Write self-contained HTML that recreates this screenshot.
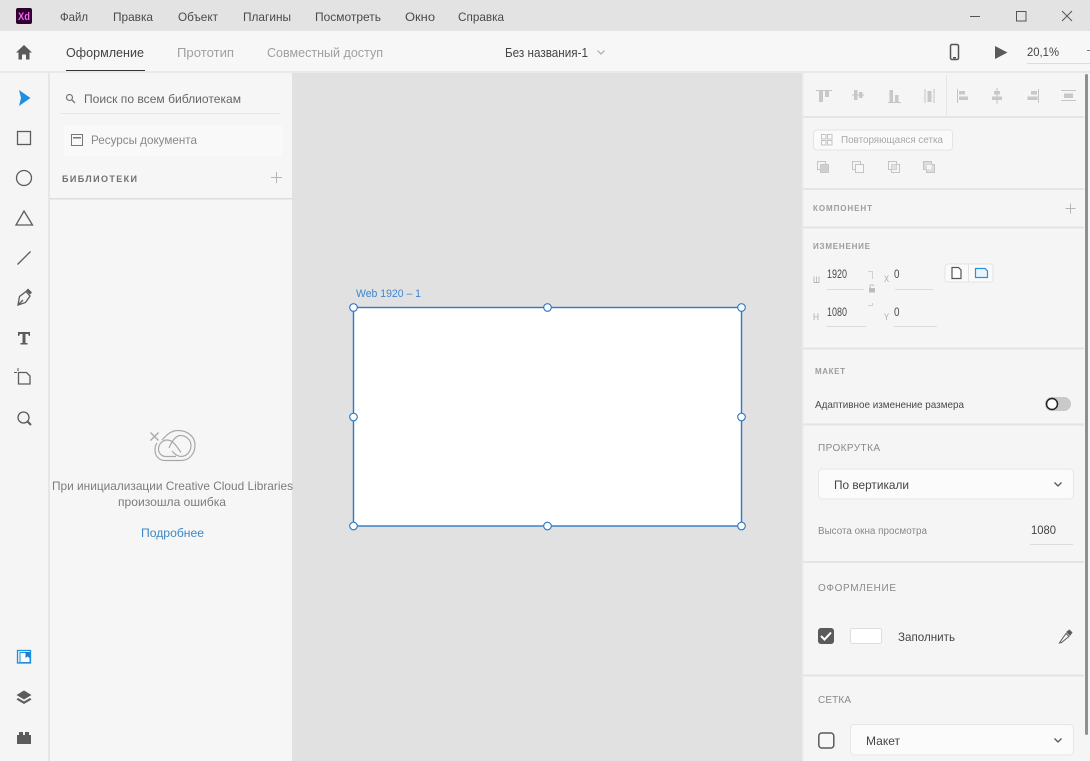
<!DOCTYPE html>
<html lang="ru"><head><meta charset="utf-8"><title>Adobe XD</title>
<style>
html,body{margin:0;padding:0;width:1090px;height:761px;overflow:hidden;background:#e1e1e1}
svg{display:block;filter:blur(.3px)}
text{font-family:"Liberation Sans","DejaVu Sans",sans-serif;font-size:12px;fill:#444}
.m{font-size:12px;fill:#4a4a4a}
.t{font-size:13px}
.s{font-size:10.5px;fill:#4a4a4a}
.n{font-size:11.5px;fill:#4a4a4a}
.g{fill:none;stroke:#c4c4c4;stroke-width:1}
.gf{fill:#c8c8c8}
.i{fill:none;stroke:#5c5c5c;stroke-width:1.3}
.u{stroke:#dcdcdc;stroke-width:1}
.d{stroke:#e4e4e4;stroke-width:2}
.c{font-size:8px;font-weight:bold;fill:#9c9c9c}
.l{font-size:10px;fill:#8a8a8a}
</style></head><body>
<svg width="1090" height="761" viewBox="0 0 1090 761" xmlns="http://www.w3.org/2000/svg">
<rect width="1090" height="761" fill="#e1e1e1"/>
<!-- title bar -->
<rect width="1090" height="31" fill="#e3e3e3"/>
<rect y="31" width="1090" height="41" fill="#f7f7f7"/>
<rect x="16" y="8" width="16" height="16" rx="2" fill="#2e0030"/>
<text x="18" y="20" style="font-size:11px;font-weight:bold;fill:#ff61f6" textLength="12" lengthAdjust="spacingAndGlyphs">Xd</text>
<text class="m" x="60" y="21" textLength="28" lengthAdjust="spacingAndGlyphs">Файл</text>
<text class="m" x="113" y="21" textLength="40" lengthAdjust="spacingAndGlyphs">Правка</text>
<text class="m" x="178" y="21" textLength="40" lengthAdjust="spacingAndGlyphs">Объект</text>
<text class="m" x="243" y="21" textLength="48" lengthAdjust="spacingAndGlyphs">Плагины</text>
<text class="m" x="315" y="21" textLength="66" lengthAdjust="spacingAndGlyphs">Посмотреть</text>
<text class="m" x="405" y="21" textLength="30" lengthAdjust="spacingAndGlyphs">Окно</text>
<text class="m" x="458" y="21" textLength="46" lengthAdjust="spacingAndGlyphs">Справка</text>
<path d="M970 16.500H980" stroke="#555" stroke-width="1"/>
<rect x="1016.500" y="11.500" width="9.500" height="9.500" fill="none" stroke="#555"/>
<path d="M1062 11L1072 21M1072 11L1062 21" stroke="#555" stroke-width="1"/>
<!-- toolbar -->
<path d="M24 45L16 52.500H18.500V59.500H22V54.500H26V59.500H29.500V52.500H32Z" fill="#5a5a5a"/>
<text class="t" x="66" y="57" textLength="78" lengthAdjust="spacingAndGlyphs">Оформление</text>
<rect x="66" y="70" width="79" height="2" fill="#333"/>
<text class="t" x="177" y="57" textLength="57" lengthAdjust="spacingAndGlyphs" style="fill:#a0a0a0">Прототип</text>
<text class="t" x="267" y="57" textLength="116" lengthAdjust="spacingAndGlyphs" style="fill:#a0a0a0">Совместный доступ</text>
<text class="t" x="505" y="57" textLength="83" lengthAdjust="spacingAndGlyphs">Без названия-1</text>
<path d="M597.500 50.500L601 54L604.500 50.500" fill="none" stroke="#aaa" stroke-width="1.200"/>
<rect x="950.500" y="44.500" width="8" height="15" rx="1.500" fill="none" stroke="#555" stroke-width="1.500"/>
<rect x="953" y="57" width="3" height="1.500" fill="#555"/>
<path d="M995 46L1007.500 52.500L995 59Z" fill="#5a5a5a"/>
<text x="1027" y="56" textLength="32" lengthAdjust="spacingAndGlyphs">20,1%</text>
<path d="M1027 63.500H1090" class="u"/>
<path d="M1087 50.500H1090" stroke="#777"/>
<rect y="71" width="1090" height="2" fill="#e9e9e9"/>
<!-- tool rail -->
<rect y="73" width="48" height="688" fill="#f5f5f5"/>
<rect x="48" y="73" width="2" height="688" fill="#e6e6e6"/>
<path d="M19 90L30.500 98L19 106L21 98Z" fill="#1d8ee0"/>
<rect x="17.500" y="131.500" width="13" height="13" fill="#f3f3f3" stroke="#5c5c5c" stroke-width="1.300"/>
<circle cx="24" cy="178" r="7.500" class="i"/>
<path d="M24 211L32.500 225H16Z" class="i"/>
<path d="M17.500 264.500L30.500 251.500" class="i"/>
<path d="M18 305L19.500 296.500L26 291.500L30 296L25.500 302.500Z" class="i"/><path d="M18 305L23 300" class="i" stroke-width="1"/>
<path d="M26 290.500L28 288.500L32 292.500L30 294.500Z" fill="#5c5c5c"/>
<path d="M18 332H30V336H29L28 334H25.500V343H27.500V344.500H20.500V343H22.500V334H20L19 336H18Z" fill="#5c5c5c"/>
<path d="M18.500 372.500H26.500L30 376V384H18.500Z" class="i" stroke-width="1.200"/>
<path d="M14 372.500H17M18 368V371" stroke="#5c5c5c" stroke-width="1"/>
<circle cx="23.500" cy="417.500" r="5.500" class="i" stroke-width="1.500"/>
<path d="M27.500 421.500L31 425" stroke="#5c5c5c" stroke-width="2"/>
<rect x="17.500" y="650.500" width="13" height="12.500" fill="none" stroke="#1d8ee0" stroke-width="1.300"/>
<rect x="20" y="652.500" width="10" height="10" fill="#fff" stroke="#1d8ee0"/>
<path d="M25.500 652H29.500V658L27.500 656.500L25.500 658Z" fill="#1a7fd0"/>
<path d="M24 690.500L31.500 695L24 699.500L16.500 695Z" fill="#5c5c5c"/>
<path d="M18 698L24 701.500L30 698L31.500 699.500L24 704L16.500 699.500Z" fill="#5c5c5c"/>
<path d="M17 735H19V732H23V735H25V732H29V735H31V744H17Z" fill="#5c5c5c"/>
<!-- library panel -->
<rect x="50" y="73" width="242" height="688" fill="#f6f6f6"/>
<circle cx="69.500" cy="97.500" r="3" fill="none" stroke="#777" stroke-width="1.200"/>
<path d="M72 100L75 103" stroke="#777" stroke-width="1.300"/>
<text x="84" y="103" textLength="157" lengthAdjust="spacingAndGlyphs" style="fill:#666">Поиск по всем библиотекам</text>
<path d="M60 113.500H281" stroke="#e8e8e8"/>
<rect x="64" y="125" width="218" height="31" fill="#f9f9f9"/>
<rect x="71.500" y="134.500" width="11" height="11" fill="none" stroke="#777" stroke-width="1"/>
<rect x="73" y="137" width="8" height="1.500" fill="#777"/>
<text x="91" y="144" textLength="106" lengthAdjust="spacingAndGlyphs" style="fill:#888">Ресурсы документа</text>
<text x="62" y="182" textLength="75" lengthAdjust="spacing" style="font-size:9px;font-weight:bold;fill:#707070">БИБЛИОТЕКИ</text>
<path d="M271 177.500H282M276.500 172V183" stroke="#b5b5b5"/>
<rect x="50" y="198" width="242" height="1.500" fill="#dddddd"/>
<g fill="none" stroke="#a8a8a8" stroke-width="1.200">
<path d="M150.500 432.500L158.500 440.500M158.500 432.500L150.500 440.500" stroke-width="1.300"/>
<path d="M162 440C166 436 170 430.500 178 430.500C188 430.500 195 437 195 445C195 454 189 460.500 181 460.500H165C159 460.500 155 456 155 450C155 447 155.500 445 157 443"/>
<path d="M176 456.500H166C161 456.500 158.500 452.500 158.500 449C158.500 443.500 163 440 167.500 440C173 440 177 447 181 452.500"/>
<path d="M169 448C172 441 176 435.500 180.500 435.500C186 435.500 191 440 191 445.500C191 451 187 456.500 181 456.500C177 456.500 175 454 172 451"/>
</g>
<text x="52" y="490" textLength="241" lengthAdjust="spacingAndGlyphs" style="fill:#7c7c7c">При инициализации Creative Cloud Libraries</text>
<text x="118" y="506" textLength="108" lengthAdjust="spacingAndGlyphs" style="fill:#7c7c7c">произошла ошибка</text>
<text x="141" y="537" textLength="63" lengthAdjust="spacingAndGlyphs" style="fill:#3f86c6">Подробнее</text>
<!-- canvas -->
<text x="356" y="297" textLength="65" lengthAdjust="spacingAndGlyphs" style="font-size:11px;fill:#3d86d2">Web 1920 – 1</text>
<rect x="353.500" y="307.500" width="388" height="218.500" fill="#fff" stroke="#2d78c8" stroke-width="1.400"/>
<g fill="#fff" stroke="#2d78c8" stroke-width="1.100">
<circle cx="353.500" cy="307.500" r="3.800"/><circle cx="547.500" cy="307.500" r="3.800"/><circle cx="741.500" cy="307.500" r="3.800"/>
<circle cx="353.500" cy="417" r="3.800"/><circle cx="741.500" cy="417" r="3.800"/>
<circle cx="353.500" cy="526" r="3.800"/><circle cx="547.500" cy="526" r="3.800"/><circle cx="741.500" cy="526" r="3.800"/>
</g>
<!-- right panel -->
<rect x="802" y="73" width="288" height="688" fill="#f5f5f5"/>
<rect x="802" y="73" width="1.500" height="688" fill="#ebebeb"/>
<rect x="1085" y="74" width="3" height="661" rx="1.500" fill="#8f8f8f"/>
<g>
<path d="M803 117H1084M803 189H1084M803 227.500H1084M803 348.500H1084M803 424.500H1084M803 562H1084M803 675.500H1084" class="d"/>
<path d="M946.500 75V116" stroke="#e6e6e6"/>
</g>
<!-- align icons -->
<g>
<path d="M816 90.500H832" class="g"/><rect x="819" y="91" width="4" height="11" class="gf"/><rect x="825" y="91" width="4" height="6" class="gf"/>
<path d="M852 95H864" class="g"/><rect x="854" y="90" width="3.500" height="10" class="gf"/><rect x="859" y="92" width="3.500" height="6" class="gf"/>
<path d="M888 102.500H901" class="g"/><rect x="889.500" y="90" width="3.500" height="12" class="gf"/><rect x="895" y="95" width="3.500" height="7" class="gf"/>
<path d="M925 89V103M934 89V103" class="g"/><rect x="927.500" y="91" width="4" height="11" class="gf"/>
<path d="M957.500 89V103" class="g"/><rect x="959" y="91" width="6" height="3.500" class="gf"/><rect x="959" y="96.500" width="9" height="3.500" class="gf"/>
<path d="M997 88V104" class="g"/><rect x="994" y="91" width="6" height="3.500" class="gf"/><rect x="992" y="96.500" width="10" height="3.500" class="gf"/>
<path d="M1038.500 89V103" class="g"/><rect x="1031" y="91" width="6" height="3.500" class="gf"/><rect x="1027.500" y="96.500" width="10" height="3.500" class="gf"/>
<path d="M1061 90.500H1076M1061 100.500H1076" class="g"/><rect x="1064" y="93.500" width="9" height="4.500" class="gf"/>
</g>
<rect x="813.500" y="130" width="139" height="20" rx="3" fill="#fafafa" stroke="#e4e4e4"/>
<g><rect x="821.500" y="134.500" width="4.500" height="4.500" class="g"/><rect x="827.500" y="134.500" width="4.500" height="4.500" class="g"/><rect x="821.500" y="140.500" width="4.500" height="4.500" class="g"/><rect x="827.500" y="140.500" width="4.500" height="4.500" class="g"/></g>
<text x="841" y="143" textLength="102" lengthAdjust="spacingAndGlyphs" style="font-size:10px;fill:#a8a8a8">Повторяющаяся сетка</text>
<g>
<rect x="817.500" y="161.500" width="8" height="8" class="g"/><rect x="820.500" y="164.500" width="8" height="8" fill="#cfcfcf" stroke="#c8c8c8"/>
<rect x="852.500" y="161.500" width="8" height="8" class="g"/><rect x="855.500" y="164.500" width="8" height="8" fill="#f7f7f7" stroke="#c4c4c4"/>
<rect x="888.500" y="161.500" width="8" height="8" class="g"/><rect x="891.500" y="164.500" width="8" height="8" class="g"/><rect x="891.500" y="164.500" width="5" height="5" fill="#e0e0e0"/>
<rect x="923.500" y="161.500" width="8" height="8" fill="#dcdcdc" stroke="#c4c4c4"/><rect x="926.500" y="164.500" width="8" height="8" fill="#dcdcdc" stroke="#c4c4c4"/><rect x="926.500" y="164.500" width="5" height="5" fill="#f5f5f5"/>
</g>
<text class="c" x="813" y="211" textLength="59" lengthAdjust="spacing">КОМПОНЕНТ</text>
<path d="M1065.500 208.500H1075.500M1070.500 203.500V213.500" stroke="#b5b5b5"/>
<text class="c" x="813" y="249" textLength="57" lengthAdjust="spacing">ИЗМЕНЕНИЕ</text>
<text x="813" y="283" textLength="7" lengthAdjust="spacingAndGlyphs" style="font-size:9px;fill:#aaa">Ш</text>
<text class="n" x="827" y="278" textLength="20" lengthAdjust="spacingAndGlyphs">1920</text>
<path d="M827 289.500H864M895 289.500H933M826 326.500H866M894 326.500H937" class="u"/>
<text x="884" y="282" textLength="5" lengthAdjust="spacingAndGlyphs" style="font-size:9px;fill:#aaa">X</text>
<text class="n" x="894" y="278" textLength="5.500" lengthAdjust="spacingAndGlyphs">0</text>
<text x="813" y="320" textLength="6" lengthAdjust="spacingAndGlyphs" style="font-size:9px;fill:#aaa">Н</text>
<text class="n" x="827" y="316" textLength="20" lengthAdjust="spacingAndGlyphs">1080</text>
<text x="884" y="320" textLength="5" lengthAdjust="spacingAndGlyphs" style="font-size:9px;fill:#aaa">Y</text>
<text class="n" x="894" y="316" textLength="5.500" lengthAdjust="spacingAndGlyphs">0</text>
<path d="M868 271.500H872.500V279M872.500 303V305.500H868" fill="none" stroke="#d0d0d0"/>
<rect x="869" y="288" width="6" height="4.500" fill="#bdbdbd"/><path d="M870 288V286C870 284.500 873.500 284.500 873.500 286" fill="none" stroke="#bdbdbd"/>
<rect x="945" y="264" width="48" height="18" rx="3" fill="#fafafa" stroke="#e4e4e4"/>
<path d="M968.500 264V282" stroke="#e4e4e4"/>
<path d="M952 267.500H958.500L961 270V278.500H952Z" fill="#fff" stroke="#555" stroke-width="1.200"/>
<path d="M975.500 268.500H985L987.500 271V277.500H975.500Z" fill="#eaf4fc" stroke="#2b8fdc" stroke-width="1.200"/>
<text class="c" x="815" y="374" textLength="30" lengthAdjust="spacing">МАКЕТ</text>
<text class="s" x="815" y="408" textLength="149" lengthAdjust="spacingAndGlyphs">Адаптивное изменение размера</text>
<rect x="1045" y="397" width="26" height="14" rx="7" fill="#c9c9c9"/>
<circle cx="1052" cy="404" r="5.500" fill="#fff" stroke="#222" stroke-width="1.500"/>
<text class="l" x="818" y="451" textLength="62" lengthAdjust="spacing">ПРОКРУТКА</text>
<rect x="818.500" y="469" width="255" height="30" rx="4" fill="#fbfbfb" stroke="#e6e6e6"/>
<text x="834" y="489" textLength="75" lengthAdjust="spacingAndGlyphs">По вертикали</text>
<path d="M1054.500 482.500L1058 486L1061.500 482.500" fill="none" stroke="#555" stroke-width="1.300"/>
<text x="818" y="534" textLength="109" lengthAdjust="spacingAndGlyphs" style="font-size:10px;fill:#888">Высота окна просмотра</text>
<text x="1031" y="534" textLength="25" lengthAdjust="spacingAndGlyphs">1080</text>
<path d="M1030 544.500H1073" class="u"/>
<text class="l" x="818" y="591" textLength="78" lengthAdjust="spacing">ОФОРМЛЕНИЕ</text>
<rect x="818" y="628" width="16" height="16" rx="3" fill="#5a5a5a"/>
<path d="M821 636L824.500 639.500L831 632.500" fill="none" stroke="#fff" stroke-width="2"/>
<rect x="850.500" y="628.500" width="31" height="15" rx="2" fill="#fff" stroke="#dedede"/>
<text x="898" y="641" textLength="57" lengthAdjust="spacingAndGlyphs">Заполнить</text>
<path d="M1060 642L1066 633.500L1069 636.500L1061.500 642.500L1059.500 643Z" fill="none" stroke="#5c5c5c"/>
<path d="M1066 632L1069.500 629.500L1072.500 632.500L1070 636Z" fill="#5c5c5c"/>
<text class="l" x="818" y="703" textLength="33" lengthAdjust="spacing">СЕТКА</text>
<rect x="818.800" y="733" width="15" height="15" rx="3" fill="#f7f7f7" stroke="#5a5a5a" stroke-width="1.500"/>
<rect x="850.500" y="724.500" width="223" height="30.500" rx="4" fill="#fbfbfb" stroke="#e6e6e6"/>
<text x="866" y="745" textLength="34" lengthAdjust="spacingAndGlyphs">Макет</text>
<path d="M1054.500 738.500L1058 742L1061.500 738.500" fill="none" stroke="#555" stroke-width="1.300"/>
</svg>
</body></html>
